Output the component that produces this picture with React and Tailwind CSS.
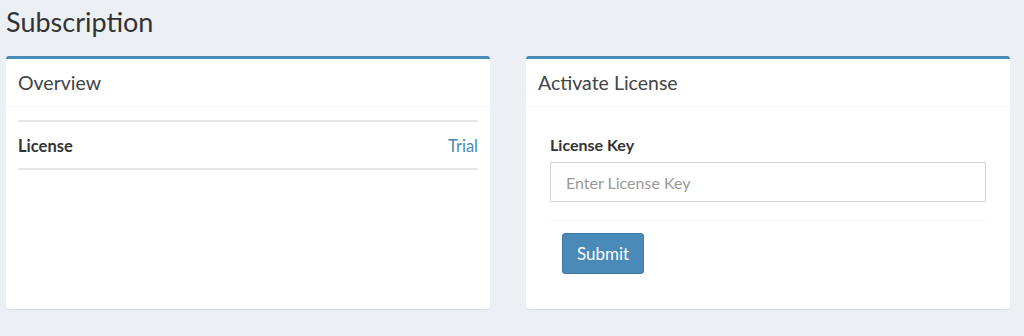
import React from "react";

const Card = ({ title, children }) => (
  <div className="h-[253px] bg-white rounded-[3px] border-t-[3px] border-[#4a8ab9] shadow-[0_1px_1px_rgba(0,0,0,0.08)] flex flex-col">
    <div className="h-[48px] border-b border-[#f4f4f4] px-[12px] flex items-center">
      <h3 className="text-[19.5px] text-[#444]">{title}</h3>
    </div>
    {children}
  </div>
);

export default function App() {
  return (
    <div
      className="h-[336px] bg-[#ecf0f5] px-[6px]"
      style={{ fontFamily: "Lato, 'Open Sans', sans-serif" }}
    >
      <h1 className="pt-[5px] h-[56px] text-[27px] leading-[34px] text-[#333]">
        Subscription
      </h1>
      <div className="flex gap-[36px]">
        <div className="w-[484px]">
          <Card title="Overview">
            <div className="px-[12px] pt-[13px]">
              <div className="h-[50px] pt-[2px] border-y-2 border-[#e6e6e6] flex items-center justify-between">
                <span className="text-[16.5px] font-bold text-[#333]">License</span>
                <span className="text-[16.5px] text-[#4a8ab9]">Trial</span>
              </div>
            </div>
          </Card>
        </div>
        <div className="w-[484px]">
          <Card title="Activate License">
            <div className="px-[24px] pt-[28px]">
              <label className="block text-[16px] font-bold text-[#333] leading-[20px] mb-[7px]">
                License Key
              </label>
              <input
                type="text"
                placeholder="Enter License Key"
                className="w-full h-[40px] border border-[#d2d2df] px-[15px] text-[16px] text-[#555] placeholder:text-[#999] outline-none"
              />
              <div className="mt-[18px] border-t border-[#f4f4f4] pt-[12px] px-[12px]">
                <button className="h-[41px] w-[82px] rounded-[3px] bg-[#4a8ab9] border border-[#3f7aa6] text-white text-[17px]">
                  Submit
                </button>
              </div>
            </div>
          </Card>
        </div>
      </div>
    </div>
  );
}
